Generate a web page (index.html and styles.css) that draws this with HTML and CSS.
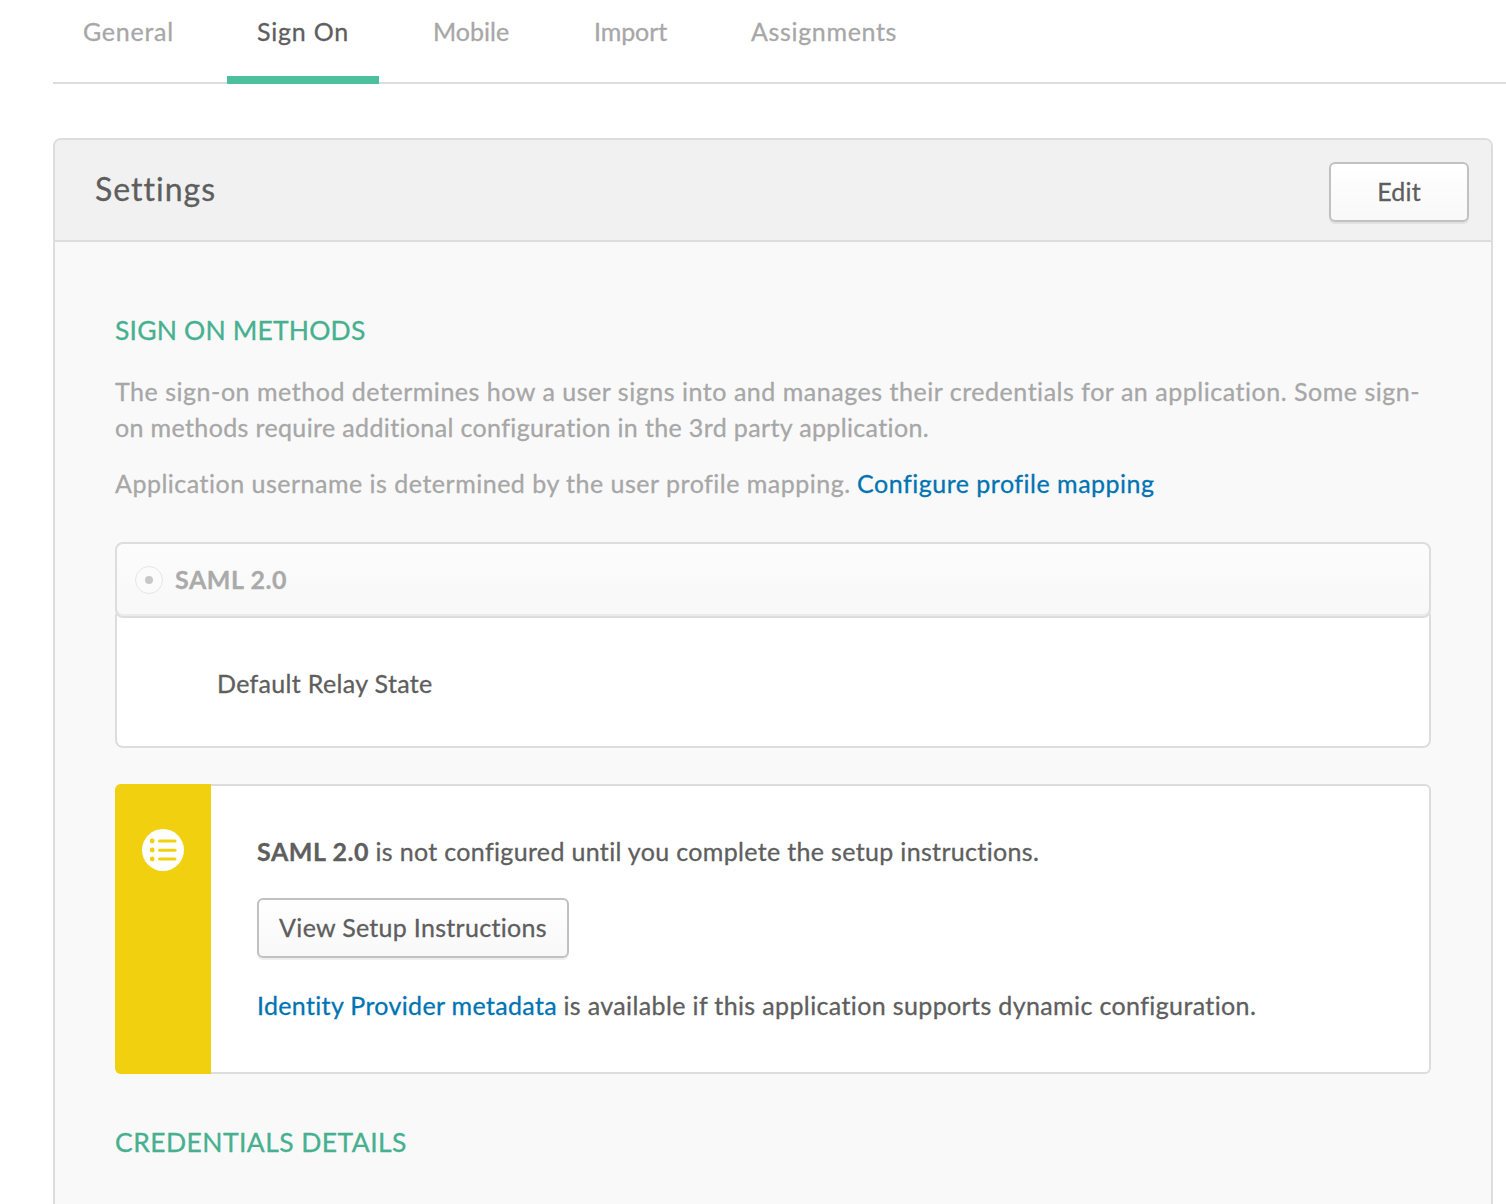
FILE: index.html
```html
<!DOCTYPE html>
<html lang="en">
<head>
<meta charset="utf-8">
<title>Sign On</title>
<link rel="stylesheet" href="styles.css">
</head>
<body>
<nav class="tabs">
  <a class="tab tab-general">General</a>
  <a class="tab tab-sign-on active">Sign On</a>
  <a class="tab tab-mobile">Mobile</a>
  <a class="tab tab-import">Import</a>
  <a class="tab tab-assignments">Assignments</a>
</nav>
<main class="panel">
  <header class="panel-header">
    <h1 class="panel-title">Settings</h1>
    <button class="button button-edit">Edit</button>
  </header>
  <div class="panel-body">
    <h2 class="section-title title-methods">SIGN ON METHODS</h2>
    <p class="hint hint-method"><span class="line line-first">The sign-on method determines how a user signs into and manages their credentials for an application. Some sign-</span><br><span class="line line-second">on methods require additional configuration in the 3rd party application.</span></p>
    <p class="hint hint-username"><span class="line line-third">Application username is determined by the user profile mapping.</span> <a class="link link-mapping">Configure profile mapping</a></p>
    <section class="method">
      <div class="method-header">
        <span class="radio"></span>
        <strong class="method-name">SAML 2.0</strong>
      </div>
      <div class="method-body"><span class="relay">Default Relay State</span></div>
    </section>
    <section class="callout">
      <div class="callout-side">
        <svg class="callout-icon" width="42" height="42" viewBox="0 0 42 42">
          <circle cx="21" cy="21" r="21" fill="#fff"/>
          <g fill="#f1d10f">
            <circle cx="10.2" cy="12" r="2.4"/>
            <circle cx="10.2" cy="21" r="2.4"/>
            <circle cx="10.2" cy="30" r="2.4"/>
            <rect x="16" y="10.5" width="18.5" height="3.1" rx="1.5"/>
            <rect x="16" y="19.7" width="18.5" height="3.1" rx="1.5"/>
            <rect x="16" y="28.4" width="18.5" height="3.1" rx="1.5"/>
          </g>
        </svg>
      </div>
      <div class="callout-content">
        <p class="callout-text"><strong class="callout-name">SAML 2.0</strong> <span class="callout-status">is not configured until you complete the setup instructions.</span></p>
        <button class="button button-setup">View Setup Instructions</button>
        <p class="callout-text"><a class="link link-metadata">Identity Provider metadata</a> <span class="callout-available">is available if this application supports dynamic configuration.</span></p>
      </div>
    </section>
    <h2 class="section-title title-credentials">CREDENTIALS DETAILS</h2>
  </div>
</main>
</body>
</html>
```
FILE: styles.css
```css
* { box-sizing: border-box; }
html, body { height: 100%; }
body {
  margin: 0;
  overflow: hidden;
  background: #fff;
  color: #5e5e5e;
  font: 25px/36px Lato, "Liberation Sans", sans-serif;
  font-variant-ligatures: none;
  -webkit-text-stroke: .3px currentColor;
}
h1, h2, p { margin: 0; font-weight: 400; }
.tabs {
  display: flex;
  gap: 24px;
  height: 84px;
  margin-left: 53px;
  border-bottom: 2px solid #ddd;
}
.tab {
  height: 84px;
  padding: 13px 0 0 30px;
  color: #a7a7a7;
  white-space: nowrap;
}
.tab.active { color: #5e5e5e; border-bottom: 8px solid #4cbf9c; }
.tab-general { width: 150px; letter-spacing: .75px; }
.tab-sign-on { width: 152px; letter-spacing: .8px; }
.tab-mobile { width: 137px; }
.tab-import { width: 133px; letter-spacing: -.1px; }
.tab-assignments { width: 206px; letter-spacing: .65px; }
.panel {
  width: 1440px;
  height: 1100px;
  margin: 54px 0 0 53px;
  border: 2px solid #ddd;
  border-radius: 8px;
  background: #f9f9f9;
}
.panel-header {
  display: flex;
  justify-content: space-between;
  height: 102px;
  padding: 22px 22px 0 40px;
  border-bottom: 2px solid #ddd;
  border-radius: 6px 6px 0 0;
  background: #f1f1f1;
}
.panel-title { font-size: 32px; line-height: 54px; letter-spacing: 1px; }
.button {
  height: 60px;
  padding: 0 0 2px;
  border: 2px solid #c1c1c1;
  border-radius: 6px;
  background: linear-gradient(#fff, #f8f8f8);
  box-shadow: 0 2px 1px rgba(0, 0, 0, .07);
  color: #5e5e5e;
  font: inherit;
  font-variant-ligatures: none;
  white-space: nowrap;
}
.button-edit { width: 140px; letter-spacing: .2px; }
.button-setup { display: block; width: 312px; margin: 28px 0 30px; letter-spacing: .3px; }
.panel-body { padding: 69px 60px 0; }
.section-title { color: #46b08f; font-size: 26.5px; line-height: 38px; }
.title-methods { letter-spacing: .17px; }
.hint { color: #a7a7a7; white-space: nowrap; }
.hint-method { margin-top: 24px; }
.hint-username { margin-top: 20px; }
.line-first { letter-spacing: .525px; }
.line-second { letter-spacing: .36px; }
.line-third { letter-spacing: .5px; }
.link { color: #0074b3; }
.link-mapping { letter-spacing: .5px; }
.method { margin-top: 41px; }
.method-header {
  position: relative;
  display: flex;
  align-items: center;
  gap: 12px;
  height: 76px;
  padding: 0 18px;
  border: 2px solid #ddd;
  border-radius: 8px;
  background: linear-gradient(#fcfcfc, #f8f8f8);
  box-shadow: inset 0 -2px 0 #ebebeb;
}
.radio {
  display: grid;
  place-items: center;
  width: 28px;
  height: 28px;
  border: 1.5px solid #e6e6e6;
  border-radius: 50%;
  background: #fbfbfb;
}
.radio::after { content: ""; width: 8px; height: 8px; border-radius: 50%; background: #c8c8c8; }
.method-name { padding-bottom: 3px; color: #aaa; }
.method-name, .callout-name { letter-spacing: .55px; }
.method-body {
  height: 134px;
  margin-top: -4px;
  padding: 51px 0 0 100px;
  border: 2px solid #ddd;
  border-top: 0;
  border-radius: 0 0 8px 8px;
  background: #fff;
}
.relay { letter-spacing: .33px; }
.callout {
  display: flex;
  height: 290px;
  margin-top: 36px;
  border: 2px solid #ddd;
  border-left: 0;
  border-radius: 6px;
  background: #fff;
}
.callout-side {
  width: 96px;
  margin: -2px 0;
  padding: 45px 27px 0;
  border-radius: 6px 0 0 6px;
  background: #f1d10f;
}
.callout-icon { display: block; }
.callout-content { padding: 47px 0 0 46px; white-space: nowrap; }
.callout-content .button-setup { margin-top: 29px; margin-bottom: 29px; }
.callout-status { letter-spacing: .335px; }
.link-metadata { letter-spacing: .34px; }
.callout-available { letter-spacing: .37px; }
.title-credentials { margin-top: 49px; letter-spacing: .43px; }
```
